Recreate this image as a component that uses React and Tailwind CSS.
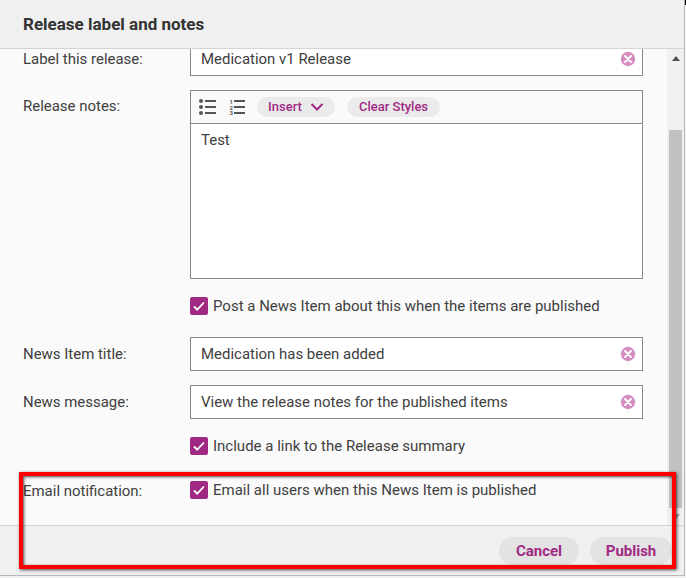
const font = "font-['Roboto',sans-serif]";

function ClearIcon() {
  return (
    <svg width="16" height="16" viewBox="0 0 16 16" className="shrink-0">
      <circle cx="8" cy="8" r="7.2" fill="#d48fc0" />
      <path d="M5 5l6 6M11 5l-6 6" stroke="#fff" strokeWidth="1.8" strokeLinecap="round" />
    </svg>
  );
}

function Check({ label }) {
  return (
    <div className="flex items-center h-5 ml-[167px]">
      <span className="w-[18px] h-[18px] rounded-[2px] bg-[#a02a83] flex items-center justify-center mr-[5px]">
        <svg width="14" height="14" viewBox="0 0 14 14" fill="none">
          <path d="M2 7.5l3.2 3.2L12 3.5" stroke="#fff" strokeWidth="1.8" />
        </svg>
      </span>
      <span className="pt-[1px] text-[15px]">{label}</span>
    </div>
  );
}

function TextRow({ label, value, className }) {
  return (
    <div className={"flex items-center " + (className || "")}>
      <label className="w-[167px] shrink-0 pt-[1px]">{label}</label>
      <div className="w-[453px] h-[34px] bg-white border border-[#888] flex items-center justify-between pl-[10px] pr-[6px]">
        <span className="pt-[1px]">{value}</span>
        <ClearIcon />
      </div>
    </div>
  );
}

export default function App() {
  return (
    <div className={"w-[686px] h-[578px] bg-[#f0f0f0] relative overflow-hidden text-[14.96px] text-[#404040] " + font}>
      <div className="w-[685px] h-[576px] flex flex-col bg-[#fafafa] border-r border-b border-[#b8b8b8]">
        <div className="h-[49px] shrink-0 bg-[#f0f0f0] border-b border-[#d4d4d4] pl-[23px] pt-[1px] flex items-center">
          <h2 className="text-[17px] font-bold text-[#333]">Release label and notes</h2>
        </div>
        <div className="flex-1 flex min-h-0">
          <div className="flex-1 overflow-hidden pl-[23px]">
            <TextRow label="Label this release:" value="Medication v1 Release" className="-mt-[7px]" />
            <div className="flex mt-[14px]">
              <label className="w-[167px] shrink-0 pt-[5px]">Release notes:</label>
              <div className="w-[453px] h-[189px] border border-[#888] bg-white flex flex-col">
                <div className="h-[33px] shrink-0 bg-[#fafafa] border-b border-[#888] flex items-center pl-2">
                  <svg width="17" height="16" viewBox="0 0 17 16" className="shrink-0">
                    <g fill="#555">
                      <circle cx="2" cy="2" r="2" />
                      <circle cx="2" cy="8" r="2" />
                      <circle cx="2" cy="14" r="2" />
                      <rect x="6" y="1" width="11" height="2" />
                      <rect x="6" y="7" width="11" height="2" />
                      <rect x="6" y="13" width="11" height="2" />
                    </g>
                  </svg>
                  <svg width="16" height="16" viewBox="0 0 16 16" className="shrink-0 ml-[13px]">
                    <g fill="#555" fontSize="6" fontFamily="Roboto, sans-serif" fontWeight="700">
                      <text x="0.5" y="4.5">1</text>
                      <text x="0.5" y="10.5">2</text>
                      <text x="0.5" y="16">3</text>
                      <rect x="5" y="1" width="11" height="2" />
                      <rect x="5" y="7" width="11" height="2" />
                      <rect x="5" y="13" width="11" height="2" />
                    </g>
                  </svg>
                  <button className="ml-3 h-5 w-[78px] rounded-full bg-[#ebebeb] text-[13px] font-medium text-[#a02a83] flex items-center justify-center gap-[8px]">
                    Insert
                    <svg width="14" height="8" viewBox="0 0 14 8" fill="none">
                      <path d="M1.5 1l5.5 5.5L12.5 1" stroke="#a02a83" strokeWidth="2" />
                    </svg>
                  </button>
                  <button className="ml-3 h-5 w-[93px] rounded-full bg-[#ebebeb] text-[13px] font-medium text-[#a02a83]">Clear Styles</button>
                </div>
                <div className="pl-[10px] pt-[5px]">Test</div>
              </div>
            </div>
            <div className="mt-[17px]">
              <Check label="Post a News Item about this when the items are published" />
            </div>
            <TextRow label="News Item title:" value="Medication has been added" className="mt-[21px]" />
            <TextRow label="News message:" value="View the release notes for the published items" className="mt-[14px]" />
            <div className="mt-[17px]">
              <Check label="Include a link to the Release summary" />
            </div>
            <div className="relative mt-[24px]">
              <label className="absolute left-0 top-[1px] leading-5">Email notification:</label>
              <Check label="Email all users when this News Item is published" />
            </div>
          </div>
          <div className="w-[17px] shrink-0 bg-[#f0f0f0] flex flex-col items-center">
            <svg width="8" height="5" viewBox="0 0 8 5" className="mt-[7px]"><path d="M4 0l4 5H0z" fill="#505050" /></svg>
            <div className="w-[13px] h-[378px] bg-[#c1c1c1] mt-[69px]" />
            <svg width="8" height="5" viewBox="0 0 8 5" className="mt-[6px]"><path d="M4 5l4-5H0z" fill="#a0a0a0" /></svg>
          </div>
        </div>
        <div className="h-[50px] shrink-0 bg-[#f0f0f0] border-t border-[#d4d4d4] flex justify-end items-start pt-[11px] pr-[12px] gap-[11px]">
          <button className="h-7 w-20 rounded-full bg-[#e3e3e3] text-[15px] font-bold text-[#a02a83]">Cancel</button>
          <button className="h-7 w-[82px] rounded-full bg-[#e3e3e3] text-[15px] font-bold text-[#a02a83]">Publish</button>
        </div>
      </div>
      {/* red annotation box */}
      <div className="absolute left-[19px] top-[472px] w-[657px] h-[97px] border-4 border-[#ff0000] shadow-[1px_1px_3px_rgba(0,0,0,0.7),inset_1px_1px_3px_rgba(0,0,0,0.7)]" />
      <div className="absolute right-0 top-0 w-[1px] h-[5px] bg-black" />
    </div>
  );
}
